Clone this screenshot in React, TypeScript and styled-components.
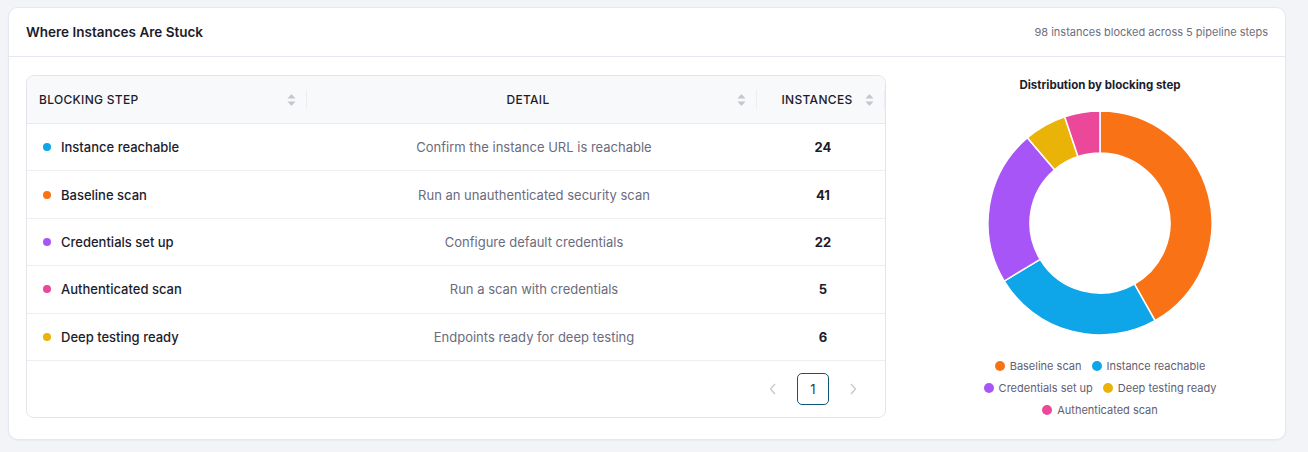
import { Fragment } from 'react';
import styled, { createGlobalStyle } from 'styled-components';

const GlobalStyle = createGlobalStyle`
  * { box-sizing: border-box; }
  body {
    margin: 0;
    background: #f3f4f8;
    font-family: Inter, "Noto Sans", sans-serif;
    color: #1c1c2b;
  }
`;

type Step = { name: string; detail: string; count: number; color: string };

const STEPS: Step[] = [
  { name: 'Instance reachable', detail: 'Confirm the instance URL is reachable', count: 24, color: '#0ea5e9' },
  { name: 'Baseline scan', detail: 'Run an unauthenticated security scan', count: 41, color: '#f97316' },
  { name: 'Credentials set up', detail: 'Configure default credentials', count: 22, color: '#a855f7' },
  { name: 'Authenticated scan', detail: 'Run a scan with credentials', count: 5, color: '#ec4899' },
  { name: 'Deep testing ready', detail: 'Endpoints ready for deep testing', count: 6, color: '#eab308' },
];

// chart / legend order
const CHART_ORDER = ['Baseline scan', 'Instance reachable', 'Credentials set up', 'Deep testing ready', 'Authenticated scan'];

const Page = styled.div`
  padding: 7px 22px 13px 8px;
`;

const Card = styled.section`
  background: #fff;
  border: 1px solid #e6e8ef;
  border-radius: 10px;
  box-shadow: 0 1px 2px rgba(20, 24, 40, 0.04);
`;

const CardHead = styled.header`
  height: 49px;
  display: flex;
  align-items: center;
  justify-content: space-between;
  padding: 0 17px 0 17px;
  border-bottom: 1px solid #e6e8ef;
`;

const Title = styled.h2`
  margin: 0;
  font-size: 13.5px;
  font-weight: 600;
  color: #1c1c2b;
`;

const Summary = styled.span`
  font-size: 11px;
  color: #6e6e80;
`;

const CardBody = styled.div`
  display: flex;
  padding: 18px 17px 21px 17px;
`;

const TableBox = styled.div`
  width: 860px;
  border: 1px solid #e3e5ea;
  border-radius: 8px;
  overflow: hidden;
`;

const Grid = styled.div`
  display: grid;
  grid-template-columns: 280px 450px 1fr;
`;

const HeadCell = styled.div<{ $align: 'left' | 'center' }>`
  height: 48px;
  background: #f8f9fb;
  border-bottom: 1px solid #e8e9ee;
  display: flex;
  align-items: center;
  padding: 0 11px 0 12px;
  position: relative;
  font-size: 12px;
  font-weight: 500;
  letter-spacing: 0.3px;
  color: #1c1c2b;
  & > span {
    flex: 1;
    text-align: ${(p) => p.$align};
  }
  &:not(:last-child)::after {
    content: '';
    position: absolute;
    right: 0;
    top: 14px;
    bottom: 14px;
    width: 1px;
    background: #eceef2;
  }
`;

const Cell = styled.div<{ $align: 'left' | 'center'; $strong?: boolean }>`
  height: 47.4px;
  display: flex;
  align-items: center;
  justify-content: ${(p) => (p.$align === 'center' ? 'center' : 'flex-start')};
  gap: 10px;
  padding: 0 12px 0 16px;
  border-bottom: 1px solid #eceef1;
  font-size: 13px;
  font-weight: ${(p) => (p.$strong ? 700 : 400)};
  color: ${(p) => (p.$strong ? '#1c1c2b' : '#6b6b7e')};
`;

const StepName = styled.span`
  font-weight: 500;
  color: #1c1c2b;
`;

const Dot = styled.span<{ $color: string; $size?: number }>`
  width: ${(p) => p.$size ?? 8}px;
  height: ${(p) => p.$size ?? 8}px;
  border-radius: 50%;
  background: ${(p) => p.$color};
  flex-shrink: 0;
`;

const Pager = styled.div`
  height: 56px;
  display: flex;
  align-items: center;
  justify-content: flex-end;
  gap: 12px;
  padding-right: 20px;
`;

const PageArrow = styled.button`
  width: 24px;
  height: 31px;
  border: 0;
  background: none;
  color: #c5c7cd;
  display: flex;
  align-items: center;
  justify-content: center;
  padding: 0;
`;

const PageNum = styled.button`
  width: 32px;
  height: 32px;
  border: 1px solid #0d5878;
  border-radius: 5px;
  background: #fff;
  font-family: inherit;
  font-size: 13px;
  color: #1c3c55;
  padding: 0;
`;

const ChartCol = styled.div`
  flex: 1;
  display: flex;
  flex-direction: column;
  align-items: center;
  padding-left: 46px;
  padding-top: 3px;
`;

const ChartTitle = styled.div`
  font-size: 11.5px;
  font-weight: 700;
  color: #1c1c2b;
  margin-bottom: 18px;
`;

const Legend = styled.div`
  margin-top: 22px;
  width: 270px;
  display: flex;
  flex-wrap: wrap;
  justify-content: center;
  column-gap: 10px;
  row-gap: 6px;
`;

const LegendItem = styled.div`
  display: flex;
  align-items: center;
  gap: 5px;
  font-size: 11px;
  color: #5f6072;
  line-height: 16px;
`;

function SortIcon() {
  return (
    <svg width="9" height="14" viewBox="0 0 9 14">
      <path d="M4.5 1 L8.5 5.5 H0.5 Z" fill="#c4c6cc" />
      <path d="M4.5 13 L8.5 8.5 H0.5 Z" fill="#c4c6cc" />
    </svg>
  );
}

function Chevron({ dir }: { dir: 'left' | 'right' }) {
  return (
    <svg width="8" height="12" viewBox="0 0 8 12">
      <path
        d={dir === 'left' ? 'M6 1 L1.5 6 L6 11' : 'M2 1 L6.5 6 L2 11'}
        fill="none"
        stroke="currentColor"
        strokeWidth="1.3"
      />
    </svg>
  );
}

function Donut() {
  const data = CHART_ORDER.map((n) => STEPS.find((s) => s.name === n)!);
  const total = data.reduce((a, s) => a + s.count, 0);
  const cx = 113;
  const cy = 113;
  const R = 112;
  const r = 70;
  let acc = 0;
  const pt = (rad: number, a: number) => [cx + rad * Math.sin(a), cy - rad * Math.cos(a)];
  return (
    <svg width="226" height="226" viewBox="0 0 226 226">
      {data.map((s) => {
        const a0 = (acc / total) * Math.PI * 2;
        acc += s.count;
        const a1 = (acc / total) * Math.PI * 2;
        const large = a1 - a0 > Math.PI ? 1 : 0;
        const [x0, y0] = pt(R, a0);
        const [x1, y1] = pt(R, a1);
        const [x2, y2] = pt(r, a1);
        const [x3, y3] = pt(r, a0);
        const d = `M${x0} ${y0} A${R} ${R} 0 ${large} 1 ${x1} ${y1} L${x2} ${y2} A${r} ${r} 0 ${large} 0 ${x3} ${y3} Z`;
        return <path key={s.name} d={d} fill={s.color} stroke="#fff" strokeWidth="1.5" />;
      })}
    </svg>
  );
}

export default function App() {
  return (
    <Page>
      <GlobalStyle />
      <Card>
        <CardHead>
          <Title>Where Instances Are Stuck</Title>
          <Summary>98 instances blocked across 5 pipeline steps</Summary>
        </CardHead>
        <CardBody>
          <TableBox>
            <Grid>
              <HeadCell $align="left">
                <span>BLOCKING STEP</span>
                <SortIcon />
              </HeadCell>
              <HeadCell $align="center">
                <span>DETAIL</span>
                <SortIcon />
              </HeadCell>
              <HeadCell $align="center">
                <span>INSTANCES</span>
                <SortIcon />
              </HeadCell>
              {STEPS.map((s) => (
                <Fragment key={s.name}>
                  <Cell $align="left">
                    <Dot $color={s.color} />
                    <StepName>{s.name}</StepName>
                  </Cell>
                  <Cell $align="center">{s.detail}</Cell>
                  <Cell $align="center" $strong>{s.count}</Cell>
                </Fragment>
              ))}
            </Grid>
            <Pager>
              <PageArrow><Chevron dir="left" /></PageArrow>
              <PageNum>1</PageNum>
              <PageArrow><Chevron dir="right" /></PageArrow>
            </Pager>
          </TableBox>
          <ChartCol>
            <ChartTitle>Distribution by blocking step</ChartTitle>
            <Donut />
            <Legend>
              {CHART_ORDER.map((n) => {
                const s = STEPS.find((x) => x.name === n)!;
                return (
                  <LegendItem key={n}>
                    <Dot $color={s.color} $size={10} />
                    {n}
                  </LegendItem>
                );
              })}
            </Legend>
          </ChartCol>
        </CardBody>
      </Card>
    </Page>
  );
}
